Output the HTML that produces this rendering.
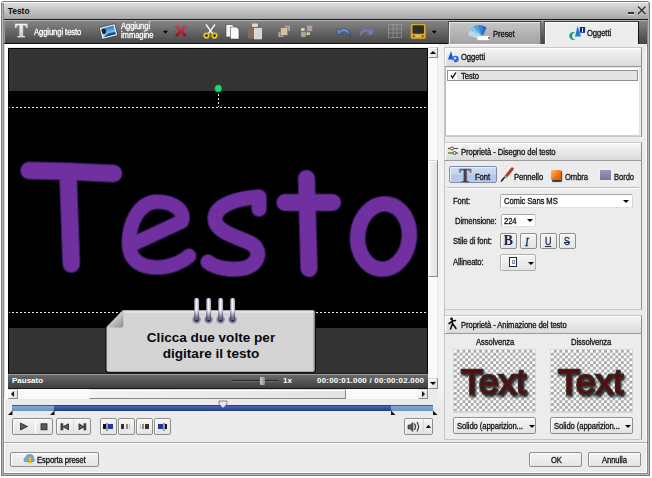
<!DOCTYPE html>
<html><head><meta charset="utf-8">
<style>
*{margin:0;padding:0;box-sizing:border-box}
html,body{width:652px;height:478px;overflow:hidden;background:#fff;font-family:"Liberation Sans",sans-serif}
.a{position:absolute}
.t{position:absolute;white-space:nowrap;font-size:8.5px;line-height:10px;letter-spacing:-0.1px;-webkit-text-stroke:0.3px currentColor;transform:scaleX(0.9);transform-origin:0 0}
.b{font-weight:bold;font-size:8px;letter-spacing:0;-webkit-text-stroke:0;transform:none}
.btn{position:absolute;border:1px solid #8e8e8e;border-radius:2px;background:linear-gradient(#f4f4f4,#e4e4e4);box-shadow:inset 1px 1px 0 #fff}
.sb{position:absolute;border:1px solid #d4d4d4;border-left-color:#f4f4f4;border-right-color:#8a8a8a;border-bottom-color:#8a8a8a;background:linear-gradient(90deg,#f2f2f2,#e2e2e2);box-shadow:inset 1px 1px 0 #fff}
.hdr{position:absolute;left:444px;width:198px;height:19px;border:1px solid #c8c8c8;border-right-color:#8e8e8e;border-bottom-color:#9a9a9a;background:linear-gradient(#f6f6f6,#dadada);box-shadow:inset 1px 1px 0 #fff}
.pnl{position:absolute;left:444px;width:198px;border:1px solid #c6c6c6;border-right-color:#8e8e8e;border-top:none;background:#ececec}
.dd{position:absolute;border:1px solid #b8b8b8;border-radius:2px;background:#fff}
.arr{position:absolute;width:0;height:0;border-left:3px solid transparent;border-right:3px solid transparent;border-top:3px solid #000}
.chk{position:absolute;background-color:#fff;background-image:linear-gradient(45deg,#a4a4a4 25%,transparent 25%,transparent 75%,#a4a4a4 75%),linear-gradient(45deg,#a4a4a4 25%,transparent 25%,transparent 75%,#a4a4a4 75%);background-size:5.6px 5.6px;background-position:0 0,2.8px 2.8px;border:1px solid #d8d8d8}
</style></head><body>
 <!-- outer frame -->
 <div class="a" style="left:1px;top:1px;width:649px;height:475px;background:#7a7a7a;border-radius:3px 3px 0 0"></div>
 <div class="a" style="left:2px;top:2px;width:647px;height:473px;background:#b8b8b8;border-radius:2px 2px 0 0"></div>
 <div class="a" style="left:3px;top:3px;width:645px;height:471px;background:#888"></div>
 <div class="a" style="left:4px;top:3px;width:643px;height:470px;background:#fff"></div>
 <div class="a" style="left:5px;top:3px;width:641px;height:469px;background:#ebebeb"></div>
 <!-- title bar -->
 <div class="a" style="left:2px;top:2px;width:647px;height:1px;background:#f4f4f4;border-radius:2px 2px 0 0"></div>
 <div class="a" style="left:4px;top:3px;width:644px;height:16px;background:linear-gradient(#dedede,#a6a6a6)"></div>
 <div class="t b" style="left:7.8px;top:6px;font-size:8.4px;color:#0a0a0a">Testo</div>
 <div class="a" style="left:628px;top:12px;width:6px;height:2px;background:#333;box-shadow:0 1px 0 #e0e0e0"></div>
 <svg class="a" style="left:636px;top:5px" width="11" height="11"><path d="M2 1.5L9.5 9M9.5 1.5L2 9" stroke="#333" stroke-width="1.3"/></svg>
 <div class="a" style="left:4px;top:19px;width:644px;height:1px;background:#1a1a1a"></div>
 <!-- toolbar -->
 <div class="a" style="left:4px;top:20px;width:643px;height:24px;background:linear-gradient(#b4b4b4 0,#b4b4b4 1px,#858585 1px,#474747 23px)"></div>
 <div class="a" style="left:4px;top:21px;width:1px;height:22px;background:#9a9a9a"></div>
 <div class="a" style="left:4px;top:43px;width:444px;height:1px;background:#101010"></div>
 <!-- toolbar items -->
 <svg class="a" style="left:0;top:20px" width="448" height="24">
  <defs>
   <linearGradient id="tg" x1="0" y1="0" x2="0" y2="1"><stop offset="0" stop-color="#ffffff"/><stop offset="1" stop-color="#b8b8b8"/></linearGradient>
   <linearGradient id="sky" x1="0" y1="0" x2="0" y2="1"><stop offset="0" stop-color="#2a78d0"/><stop offset="1" stop-color="#a8e4f8"/></linearGradient>
   <linearGradient id="xr" x1="0" y1="0" x2="0" y2="1"><stop offset="0" stop-color="#e04048"/><stop offset="1" stop-color="#a01018"/></linearGradient>
   <linearGradient id="ub" x1="0" y1="0" x2="0" y2="1"><stop offset="0" stop-color="#7aa8e8"/><stop offset="1" stop-color="#2a5ab0"/></linearGradient>
  </defs>
  <text x="15" y="17.2" font-family="Liberation Serif" font-weight="bold" font-size="18.5" fill="url(#tg)" stroke="#f0f0f0" stroke-width="0.5">T</text>
  <g transform="translate(0,-20) rotate(-14 108.5 31.5)"><rect x="100.5" y="25.5" width="16" height="12" fill="#fdfdfd" stroke="#222" stroke-width="0.6"/><rect x="102" y="27" width="13" height="9" fill="url(#sky)"/><path d="M102 28.5q2-1.5 4 0q1 2-0.5 4q-2 1-3.5-0.5z" fill="#142810"/><path d="M102 36l5-2.5q4-1 8 0.5v2z" fill="#1a4a90"/></g>
  <path d="M163 10.8h5l-2.5 3z" fill="#000"/>
  <path d="M176.8 6.8L185 15.2M185 6.8L176.8 15.2" stroke="#5a2a2a" stroke-width="3" stroke-linecap="round" opacity="0.7"/>
  <path d="M176.8 6.8L185 15.2M185 6.8L176.8 15.2" stroke="url(#xr)" stroke-width="2.2" stroke-linecap="round"/>
  <path d="M206 4.5L212.5 13.5M215 4.5L208.5 13.5" stroke="#f4f4f4" stroke-width="1.4"/>
  <circle cx="206.5" cy="15.6" r="2.2" fill="#1a1a40" stroke="#f0cc00" stroke-width="1.8"/><circle cx="214.5" cy="15.6" r="2.2" fill="#1a1a40" stroke="#f0cc00" stroke-width="1.8"/>
  <path d="M226 4.5h6l2.5 2.5V17H226z" fill="#f4f4f4" stroke="#333" stroke-width="0.5"/>
  <path d="M230.5 7h6l2.5 2.5V19h-8.5z" fill="#fafafa" stroke="#333" stroke-width="0.5"/>
  <rect x="248" y="5.5" width="13.5" height="13" rx="1" fill="#8a6a58"/><rect x="252" y="3.5" width="6" height="3.5" rx="1" fill="#d8d8d8"/><rect x="254" y="8" width="8" height="11.3" fill="#d8d8d8"/>
  <rect x="284.5" y="5.8" width="5.5" height="5" fill="#b0a0a0"/><rect x="278.3" y="12" width="5.5" height="5" fill="#b0a0a0"/><rect x="280.5" y="7.8" width="7.3" height="7.4" fill="#d0c4a0" stroke="#555" stroke-width="0.4"/>
  <rect x="307" y="5.7" width="5.2" height="5.4" fill="#b0a0a0"/><rect x="301" y="11.8" width="4.8" height="5.1" fill="#b0a0a0"/><rect x="301" y="8" width="3.6" height="3" fill="#d8cc9a"/><rect x="306.4" y="12.4" width="3.6" height="2.6" fill="#d8cc9a"/>
  <path d="M337 8L337.3 14.5L343.5 14.5L341 12.3Q346 10.5 349.5 15.5Q350.5 17 350.5 17Q350 10 345.5 9Q342 8.5 339.5 10.3Z" fill="url(#ub)" stroke="#1a3060" stroke-width="0.4"/>
  <path d="M373 8L372.7 14.5L366.5 14.5L369 12.3Q364 10.5 360.5 15.5Q359.5 17 359.5 17Q360 10 364.5 9Q368 8.5 370.5 10.3Z" fill="#6a80b0"/>
  <g fill="none" stroke="#a8a8a8" stroke-width="1" stroke-dasharray="1 1"><rect x="388.5" y="4.5" width="13" height="13"/><path d="M393 4.5v13M397 4.5v13M388.5 9h13M388.5 13h13"/></g>
  <rect x="410.5" y="3.5" width="15.5" height="15.5" rx="2" fill="#d8a838" stroke="#8a6a20" stroke-width="0.6"/><rect x="412.5" y="5.3" width="11.5" height="8.5" rx="1" fill="#2e2e2e"/><circle cx="413.8" cy="16.2" r="1" fill="#8a3a10"/><circle cx="422.7" cy="16.2" r="1" fill="#8a3a10"/><rect x="416" y="15.5" width="4.5" height="1.4" fill="#e8c870"/>
  <path d="M431.8 10.8h5l-2.5 3z" fill="#000"/>
 </svg>
 <div class="t" style="left:34.3px;top:27.2px;color:#fff">Aggiungi testo</div>
 <div class="t" style="left:120.5px;top:22.2px;color:#fff;line-height:8.8px">Aggiungi<br>immagine</div>
 <!-- left content frame -->
 <div class="a" style="left:4px;top:44px;width:436px;height:3px;background:#fff"></div>
 <div class="a" style="left:4px;top:44px;width:4px;height:355px;background:#fff;border-left:1px solid #e0e0e0"></div>
 <div class="a" style="left:438px;top:44px;width:6px;height:355px;background:#f2f2f2"></div>
 <div class="a" style="left:444px;top:44px;width:1px;height:393px;background:#bdbdbd"></div>
 <!-- video -->
 <div class="a" style="left:8px;top:48px;width:420px;height:326px;background:#000"></div>
 <div class="a" style="left:9px;top:49px;width:418px;height:42px;background:#333"></div>
 <div class="a" style="left:9px;top:328px;width:418px;height:45px;background:#333"></div>
 <!-- dotted lines -->
 <div class="a" style="left:9px;top:107px;width:418px;height:1px;background-image:linear-gradient(90deg,transparent 1px,#e8e8e8 1px,#e8e8e8 3px,transparent 3px);background-size:4px 1px;background-position:-2px 0"></div>
 <div class="a" style="left:9px;top:312px;width:418px;height:1px;background-image:linear-gradient(90deg,transparent 1px,#e8e8e8 1px,#e8e8e8 3px,transparent 3px);background-size:4px 1px;background-position:-2px 0"></div>
 <div class="a" style="left:218px;top:93px;width:1px;height:14px;background-image:linear-gradient(#e8e8e8 50%,transparent 50%);background-size:1px 4px;background-position:0 1px"></div>
 <svg class="a" style="left:210px;top:80px" width="16" height="16"><circle cx="8.3" cy="8.4" r="3.9" fill="#18e070" stroke="#3a1030" stroke-width="0.7"/></svg>
 <!-- big text -->
 <svg class="a" style="left:0;top:0" width="440" height="380">
  <g fill="none" stroke-linecap="round" stroke-linejoin="round">
   <g stroke="#3e1c64">
    <path stroke-width="18.4" d="M29.2 170.5Q70 171 113.5 173.5M68.2 178L71.3 264"/>
    <path stroke-width="15.6" d="M135.5 243L181.5 221.5C186 210 172 201.5 157 201.7C138 202 129 225 129 243C129 262 143 267.5 157 267.5C170 267.5 182 262 189 256"/>
    <path stroke-width="16" d="M259 209L259 197C240 198 215 204 215 219C215 232 238 237 250 243C262 249 260 263 245 268C232 271 215 268 208 262"/>
    <path stroke-width="18" d="M306.5 178.5L309 268.5M285 202.5L332.5 202.5"/>
    <ellipse cx="383.5" cy="236.5" rx="25.8" ry="32.7" transform="rotate(6 383.5 236.5)" stroke-width="16.4"/>
   </g>
   <g stroke="#7030a0">
    <path stroke-width="16.2" d="M29.2 170.5Q70 171 113.5 173.5M68.2 178L71.3 264"/>
    <path stroke-width="13.4" d="M135.5 243L181.5 221.5C186 210 172 201.5 157 201.7C138 202 129 225 129 243C129 262 143 267.5 157 267.5C170 267.5 182 262 189 256"/>
    <path stroke-width="13.8" d="M259 209L259 197C240 198 215 204 215 219C215 232 238 237 250 243C262 249 260 263 245 268C232 271 215 268 208 262"/>
    <path stroke-width="15.8" d="M306.5 178.5L309 268.5M285 202.5L332.5 202.5"/>
    <ellipse cx="383.5" cy="236.5" rx="25.8" ry="32.7" transform="rotate(6 383.5 236.5)" stroke-width="14.2"/>
   </g>
  </g>
 </svg>
 <!-- bubble -->
 <svg class="a" style="left:0;top:0" width="440" height="380">
  <defs>
   <linearGradient id="rod" x1="0" x2="1" y1="0" y2="0"><stop offset="0" stop-color="#8a8aa6"/><stop offset="0.45" stop-color="#ffffff"/><stop offset="1" stop-color="#9a9ab4"/></linearGradient>
   <linearGradient id="rodv" x1="0" x2="0" y1="0" y2="1"><stop offset="0.6" stop-color="#000" stop-opacity="0"/><stop offset="1" stop-color="#2a2a55" stop-opacity="0.8"/></linearGradient>
   <radialGradient id="hole"><stop offset="0.3" stop-color="#1e1e40"/><stop offset="0.55" stop-color="#6a6a8a"/><stop offset="1" stop-color="#a8a8bc"/></radialGradient>
   <linearGradient id="flap" x1="0" y1="0" x2="1" y2="1"><stop offset="0.3" stop-color="#e4e4e4"/><stop offset="1" stop-color="#8a8a8a"/></linearGradient>
   <g id="ring"><circle cx="196.6" cy="319.5" r="4.4" fill="url(#hole)"/><rect x="194.2" y="298" width="4.9" height="22" rx="2.45" fill="url(#rod)"/><rect x="194.2" y="298" width="4.9" height="22" rx="2.45" fill="url(#rodv)"/></g>
  </defs>
  <path d="M105.5 327.6L123.4 309.4H313.5Q316 309.4 316 312V370.5Q316 372.8 313.5 372.8H108Q105.5 372.8 105.5 370.3Z" fill="#0a0a0a"/>
  <path d="M106.5 328L123.6 310.4H313Q314.5 310.4 314.5 312V370Q314.5 371.8 313 371.8H108.5Q106.5 371.8 106.5 369.8Z" fill="#d4d4d4"/>
  <path d="M123.6 310.4H313Q314.5 310.4 314.5 312V313H123.6Z" fill="#e2e2e2"/>
  <path d="M313.2 311V370.5Q313.2 371 312.7 371H108.5V371.8H313Q314.5 371.8 314.5 370V312Q314.5 311 313.2 311Z" fill="#a8a8a8"/>
  <path d="M106 327.6L123.4 309.6V325Q123.4 327.6 120.8 327.6Z" fill="url(#flap)"/>
  <use href="#ring"/><use href="#ring" x="12"/><use href="#ring" x="24"/><use href="#ring" x="36"/>
 </svg>
 <div class="t" style="left:105px;top:330px;width:212px;text-align:center;font-weight:bold;font-size:13.6px;letter-spacing:0;transform:none;-webkit-text-stroke:0;line-height:15.5px;color:#08080f">Clicca due volte per<br>digitare il testo</div>
 <!-- status bar -->
 <div class="a" style="left:8px;top:373px;width:420px;height:16px;background:linear-gradient(#1e1e1e 0,#1e1e1e 1px,#9a9a9a 1px,#9a9a9a 2px,#6a6a6a 2px,#3e3e3e 15px,#161616 15px)"></div>
 <div class="t b" style="left:12px;top:376px;color:#fff">Pausato</div>
 <div class="a" style="left:232px;top:380px;width:46px;height:2px;background:#2a2a2a;border-bottom:1px solid #6a6a6a"></div>
 <div class="a" style="left:260px;top:377px;width:5px;height:8px;background:linear-gradient(90deg,#ccc,#888);border-radius:1px"></div>
 <div class="t b" style="left:283px;top:376px;color:#fff">1x</div>
 <div class="t b" style="left:317px;top:376px;letter-spacing:0.2px;color:#fff">00:00:01.000 / 00:00:02.000</div>
 <!-- v scrollbar -->
 <div class="a" style="left:428px;top:48px;width:10px;height:341px;background:#fafafa;border-right:1px solid #e8e8e8"></div>
 <div class="sb" style="left:428px;top:47px;width:10px;height:11px"></div>
 <div class="arr" style="left:430px;top:51px;border-left-width:3px;border-right-width:3px;border-top:none;border-bottom:3px solid #000"></div>
 <div class="sb" style="left:428px;top:160px;width:10px;height:117px"></div>
 <div class="sb" style="left:428px;top:378px;width:10px;height:11px"></div>
 <div class="arr" style="left:430px;top:382px;border-left-width:3px;border-right-width:3px;border-top-width:3px;border-top-color:#000"></div>
 <!-- h scrollbar -->
 <div class="a" style="left:8px;top:389px;width:420px;height:10px;background:#fafafa"></div>
 <div class="sb" style="left:8px;top:389px;width:10px;height:10px"></div>
 <div class="a" style="left:11px;top:391px;width:0;height:0;border-top:3px solid transparent;border-bottom:3px solid transparent;border-right:3px solid #111"></div>
 <div class="sb" style="left:89px;top:389px;width:257px;height:10px"></div>
 <div class="sb" style="left:418px;top:389px;width:10px;height:10px"></div>
 <div class="a" style="left:422px;top:391px;width:0;height:0;border-top:3px solid transparent;border-bottom:3px solid transparent;border-left:3px solid #111"></div>
 <div class="a" style="left:428px;top:389px;width:10px;height:10px;background:#ebebeb"></div>
 <!-- timeline -->
 <div class="a" style="left:12px;top:405px;width:421px;height:6px;background:linear-gradient(#4a68b8,#243a88);border-top:1px solid #33405a"></div>
 <div class="a" style="left:12px;top:405px;width:42px;height:6px;background:linear-gradient(#86acd8,#6690c6);border-top:1px solid #4a5a70"></div>
 <div class="a" style="left:391px;top:405px;width:42px;height:6px;background:linear-gradient(#86acd8,#6690c6);border-top:1px solid #4a5a70"></div>
 <svg class="a" style="left:218px;top:400px" width="10" height="9"><path d="M1 1H9V4L5 8L1 4Z" fill="#e8e8e8" stroke="#888"/></svg>
 <svg class="a" style="left:0;top:410px" width="440" height="6"><g fill="#111"><path d="M8 5L12.5 0.5V5Z"/><path d="M50 5L54.5 0.5V5Z"/><path d="M391 0.5L395.5 5H391Z"/><path d="M433 0.5L437.5 5H433Z"/></g></svg>
 <!-- control buttons -->
 <div class="btn" style="left:12px;top:418px;width:41px;height:17px"></div>
 <div class="a" style="left:35px;top:419px;width:1px;height:15px;background:#d8d8d8;border-right:1px solid #fff"></div>
 <div class="btn" style="left:56px;top:418px;width:35px;height:17px"></div>
 <div class="a" style="left:73px;top:419px;width:1px;height:15px;background:#d8d8d8"></div>
 <div class="btn" style="left:100px;top:418px;width:17px;height:17px"></div>
 <div class="btn" style="left:118px;top:418px;width:17px;height:17px"></div>
 <div class="btn" style="left:136px;top:418px;width:17px;height:17px"></div>
 <div class="btn" style="left:154px;top:418px;width:17px;height:17px"></div>
 <div class="btn" style="left:404px;top:418px;width:29px;height:17px"></div>
 <div class="a" style="left:423px;top:419px;width:1px;height:15px;background:#d8d8d8"></div>
 <svg class="a" style="left:0;top:414px" width="440" height="26"><g fill="#5a5a5a" stroke="#222" stroke-width="0.8">
  <path d="M20.5 9L27.5 12.5L20.5 16Z"/><rect x="41" y="9.8" width="6" height="6"/>
  <rect x="61" y="9.8" width="1.8" height="6"/><path d="M68.5 9.8L63 12.8L68.5 15.8Z"/>
  <rect x="84" y="9.8" width="1.8" height="6"/><path d="M79 9.8L84 12.8L79 15.8Z"/>
  </g>
  <g stroke="none">
   <rect x="103" y="10" width="3" height="5" fill="#111"/><rect x="107" y="10" width="6" height="5" fill="#2038a0"/><rect x="106" y="9" width="2" height="8" fill="#999"/>
   <rect x="121" y="10" width="3" height="5" fill="#333"/><rect x="126" y="10" width="2" height="5" fill="#888"/><rect x="129" y="10" width="1" height="5" fill="#bbb"/>
   <rect x="140" y="10" width="1" height="5" fill="#bbb"/><rect x="142" y="10" width="2" height="5" fill="#888"/><rect x="145" y="10" width="4" height="5" fill="#333"/>
   <rect x="158" y="10" width="6" height="5" fill="#2038a0"/><rect x="163" y="9" width="2" height="8" fill="#999"/><rect x="165" y="10" width="2" height="5" fill="#111"/>
   <path d="M408 11H410L413 8.5V17.5L410 15H408Z" fill="#5a5a5a" stroke="#333" stroke-width="0.6"/>
   <path d="M414.5 9.5Q416.5 12.8 414.5 16M417 8Q420 12.8 417 17.5" stroke="#333" stroke-width="1.1" fill="none"/>
   <path d="M425.8 14L428.4 10.8L431 14Z" fill="#111"/>
  </g>
 </svg>
 <!-- bottom -->
 <div class="a" style="left:4px;top:442px;width:643px;height:1px;background:#a8a8a8"></div>
 <div class="a" style="left:4px;top:443px;width:643px;height:1px;background:#fff"></div>
 <div class="btn" style="left:10px;top:452px;width:89px;height:15px"></div>
 <div class="t" style="left:37px;top:455px;color:#111">Esporta preset</div>
 <svg class="a" style="left:22px;top:452px" width="14" height="15"><path d="M2.5 9.5Q1 6 4 5Q4.5 2 8 2.5Q11.5 2.5 11.5 6Q13 7 12 9.5Z" fill="#6ab0e8" stroke="#3a80c0" stroke-width="0.6"/><path d="M5 7.5L8 4.5L11 7.5H9.3V11.5H6.7V7.5Z" fill="#f8c020" stroke="#b08000" stroke-width="0.5"/><path d="M3 11.5h9" stroke="#ddd" stroke-width="1.2"/></svg>
 <div class="btn" style="left:529px;top:452px;width:53px;height:15px"></div>
 <div class="t" style="left:550.5px;top:455px;color:#111">OK</div>
 <div class="btn" style="left:588px;top:452px;width:53px;height:15px"></div>
 <div class="t" style="left:602px;top:455px;color:#111">Annulla</div>
 <!-- tabs -->
 <div class="a" style="left:448px;top:21px;width:93px;height:23px;border-top:1px solid #3a3a3a;border-left:1px solid #555;border-right:1px solid #666;background:linear-gradient(#c6c6c6,#a2a2a2);box-shadow:inset 1px 1px 0 #e8e8e8"></div>
 <div class="a" style="left:544px;top:21px;width:95px;height:26px;border-top:1px solid #3a3a3a;border-left:1px solid #555;border-right:1px solid #111;background:#ececec;box-shadow:inset 1px 1px 0 #fff"></div>
 <div class="a" style="left:444px;top:44px;width:203px;height:3px;background:#ececec"></div>
 <div class="a" style="left:448px;top:44px;width:93px;height:1px;background:#fff"></div>
 <div class="t" style="left:492.5px;top:28.5px;color:#111">Preset</div>
 <div class="t" style="left:587px;top:28px;color:#111">Oggetti</div>
 <svg class="a" style="left:0;top:0" width="652" height="44"><g transform="translate(0 20)">
  <g transform="translate(479 17)"><rect x="-2" y="-12" width="5" height="12" rx="1.5" fill="#2a6ac0" transform="rotate(25)"/><rect x="-2" y="-12" width="5" height="12" rx="1.5" fill="#3a80d0" transform="rotate(5)"/><rect x="-2" y="-12" width="5" height="12" rx="1.5" fill="#5aa0dc" transform="rotate(-20)"/><rect x="-2" y="-12" width="5" height="12" rx="1.5" fill="#8ac4e8" transform="rotate(-45)"/><rect x="-2" y="-11" width="5" height="11" rx="1.5" fill="#b4dcf0" transform="rotate(-70)"/></g>
  <rect x="476.5" y="15.5" width="14" height="5" rx="2.5" fill="#fff" stroke="#999" stroke-width="0.5"/><circle cx="489" cy="18" r="0.9" fill="#444"/>
  <path d="M575.5 12.5A4 4 0 1 0 575.5 19.3A3.2 3.2 0 1 1 575.5 12.5Z" fill="#12a070"/>
  <path d="M577.5 6L575 16.5H581Z" fill="#1a80d0"/>
  <rect x="579.8" y="7" width="5.3" height="5.8" fill="#0a2aa0"/><rect x="582" y="8" width="1" height="4" fill="#fff"/>
 </g></svg>
 <!-- right panel: Oggetti -->
 <div class="hdr" style="top:47px;height:20px"></div>
 <svg class="a" style="left:446px;top:49px" width="16" height="16"><path d="M5 2L2 10.5H7.5Z" fill="#1a5ad0"/><circle cx="9.5" cy="10" r="3.2" fill="#2a6ae0"/><circle cx="9" cy="9.3" r="1.3" fill="#bde"/><path d="M1.5 13L5 11H8V13Z" fill="#cde"/></svg>
 <div class="t" style="left:461px;top:52px;color:#111">Oggetti</div>
 <div class="pnl" style="top:67px;height:70px"></div>
 <div class="a" style="left:445px;top:67px;width:195px;height:69px;background:#fff;border:1px solid #e4e4e4;border-left-color:#b8b8b8;border-bottom-color:#d0d0d0"></div>
 <div class="a" style="left:447px;top:70px;width:191px;height:11px;background:#e4e4e4;border:1px solid #909090"></div>
 <div class="a" style="left:448px;top:71px;width:9px;height:9px;background:#fff"></div>
 <svg class="a" style="left:449px;top:71px" width="9" height="9"><path d="M2 4.2L3.5 6.8L7 1.5" fill="none" stroke="#000" stroke-width="1.3"/></svg>
 <div class="t" style="left:461px;top:71px;color:#111">Testo</div>
 <!-- props header -->
 <div class="hdr" style="top:142px;height:19px"></div>
 <svg class="a" style="left:447px;top:146px" width="12" height="10"><g stroke="#444" stroke-width="1" fill="none"><path d="M1 2.5h2.5M6.5 2.5h4.5M1 7h5M9 7h2"/><circle cx="5" cy="2.5" r="1.5" fill="#fff"/><circle cx="7.5" cy="7" r="1.5" fill="#fff"/></g><path d="M1 1.8h2v1.4H1z" fill="#d04040"/><path d="M1 6.3h4v1.4H1z" fill="#60c040"/></svg>
 <div class="t" style="left:460.5px;top:147px;color:#111">Proprietà - Disegno del testo</div>
 <div class="pnl" style="top:161px;height:149px"></div>
 <div class="a" style="left:449px;top:166px;width:48px;height:17px;border:1px solid #7d8ea8;border-radius:2px;background:linear-gradient(#d0def2 0,#c0d2ec 50%,#b0c6e6 50%,#b8ccea 100%);box-shadow:inset 1px 1px 0 #e8f0fa"></div>
 <svg class="a" style="left:458px;top:166px" width="16" height="17"><defs><linearGradient id="tg2" x1="0" x2="1"><stop offset="0" stop-color="#9a9a9a"/><stop offset="0.45" stop-color="#3a3a3a"/><stop offset="1" stop-color="#8a8a8a"/></linearGradient></defs><text x="1.2" y="16" font-family="Liberation Serif" font-weight="bold" font-size="18" fill="url(#tg2)" stroke="#555" stroke-width="0.5">T</text></svg>
 <div class="t" style="left:474.5px;top:171.5px;color:#111">Font</div>
 <svg class="a" style="left:499px;top:166px" width="16" height="17"><path d="M13.2 2.8L7 10.5" stroke="#b83a20" stroke-width="3" stroke-linecap="round"/><path d="M7.2 10.2L4.5 13.5Q3.5 15.5 1.8 15.8Q2.5 13.5 4.2 11.8Z" fill="#2a2a2a" stroke="#111" stroke-width="0.5"/><path d="M6 11.6l1.6-1.5" stroke="#bbb" stroke-width="1.4"/></svg>
 <div class="t" style="left:514px;top:171.5px;color:#111">Pennello</div>
 
 <div class="a" style="left:551px;top:169.5px;width:9.5px;height:10px;background:linear-gradient(135deg,#ffc070,#f07010 60%,#d85a00);border-radius:1px;box-shadow:1px 1.5px 1px #3a3a3a"></div>
 <div class="t" style="left:565px;top:171.5px;color:#111">Ombra</div>
 <div class="a" style="left:600px;top:169.5px;width:10.5px;height:10.5px;background:linear-gradient(#9896b8,#7876a0);outline:1px dotted #f4f4f4;outline-offset:0"></div>
 <div class="t" style="left:613.5px;top:171.5px;color:#111">Bordo</div>
 <div class="a" style="left:447px;top:187px;width:192px;height:1px;background:#bcbcbc"></div>
 <div class="a" style="left:447px;top:188px;width:192px;height:1px;background:#fff"></div>
 <div class="t" style="left:452.8px;top:196px;color:#111">Font:</div>
 <div class="dd" style="left:500px;top:194px;width:133px;height:14px;border-color:#a4a4a4 #d4d4d4 #e0e0e0 #b4b4b4"></div>
 <div class="t" style="left:503.5px;top:195.5px;color:#111">Comic Sans MS</div>
 <div class="arr" style="left:622.5px;top:200px"></div>
 <div class="t" style="left:454.7px;top:216px;color:#111">Dimensione:</div>
 <div class="dd" style="left:501px;top:214px;width:35px;height:13px;border-color:#a4a4a4 #d4d4d4 #e0e0e0 #b4b4b4"></div>
 <div class="t" style="left:504px;top:216px;color:#111">224</div>
 <div class="arr" style="left:527px;top:219px"></div>
 <div class="t" style="left:452.8px;top:236px;color:#111">Stile di font:</div>
 <div class="btn" style="left:500px;top:233px;width:17px;height:16px"></div>
 <div class="btn" style="left:520px;top:233px;width:17px;height:16px"></div>
 <div class="btn" style="left:540px;top:233px;width:17px;height:16px"></div>
 <div class="btn" style="left:559px;top:233px;width:17px;height:16px"></div>
 <div class="t" style="left:503.5px;top:235px;font-family:'Liberation Serif',serif;font-weight:bold;font-size:14px;line-height:12px;color:#1a2a4a;transform:none;-webkit-text-stroke:0">B</div>
 <div class="t" style="left:525px;top:235.5px;font-family:'Liberation Serif',serif;font-style:italic;font-size:12.5px;line-height:12px;color:#1a2a4a">I</div>
 <div class="t" style="left:544.5px;top:235.5px;font-size:10px;line-height:12px;color:#1a2a4a;text-decoration:underline">U</div>
 <div class="t" style="left:564px;top:235.5px;font-size:10px;line-height:12px;color:#1a2a4a;text-decoration:line-through">S</div>
 <div class="t" style="left:452.8px;top:256.5px;color:#111">Allineato:</div>
 <div class="btn" style="left:500px;top:254px;width:36px;height:17px;border-color:#b0b0b0"></div>
 <div class="a" style="left:509px;top:257px;width:8px;height:10px;border:1px solid #1a2a4a;background:#fff"></div>
 <div class="a" style="left:511.5px;top:260px;width:3px;height:4px;border:1px solid #8a8a9a"></div>
 <div class="arr" style="left:528px;top:262px"></div>
 <!-- animation -->
 <div class="hdr" style="top:315px;height:19px"></div>
 <svg class="a" style="left:447px;top:317px" width="12" height="14"><g fill="none" stroke="#111" stroke-width="1.5" stroke-linecap="round"><path d="M5 2L5.5 6.5L3.5 12M5.5 6.5L9 11.5M5.2 4.5L2 6.5M5.2 4L8.5 3.5"/></g><circle cx="4.5" cy="1.8" r="1.4" fill="#111"/></svg>
 <div class="t" style="left:460.5px;top:320px;color:#111">Proprietà - Animazione del testo</div>
 <div class="pnl" style="top:334px;height:106px"></div>
 <div class="t" style="left:476px;top:337px;color:#111">Assolvenza</div>
 <div class="t" style="left:571px;top:337px;color:#111">Dissolvenza</div>
 <div class="chk" style="left:453px;top:349px;width:83px;height:64px"></div>
 <div class="chk" style="left:550px;top:349px;width:83px;height:64px"></div>
 <svg class="a" style="left:444px;top:340px" width="200" height="80"><defs><filter id="sh" x="-20%" y="-20%" width="140%" height="140%"><feGaussianBlur in="SourceAlpha" stdDeviation="1.2"/><feOffset dx="1" dy="1.5"/><feComponentTransfer><feFuncA type="linear" slope="0.8"/></feComponentTransfer><feMerge><feMergeNode/><feMergeNode in="SourceGraphic"/></feMerge></filter></defs>
  <g font-family="Liberation Sans" font-size="35.5" fill="#561010" stroke="#2e2e2e" stroke-width="2.6" paint-order="stroke" filter="url(#sh)"><text x="17.3" y="53.5">Text</text><text x="114.3" y="53.5">Text</text></g></svg>
 
 <div class="btn" style="left:453px;top:417px;width:83px;height:17px"></div>
 <div class="t" style="left:457px;top:421px;color:#111">Solido (apparizion...</div>
 <div class="arr" style="left:528.5px;top:424.5px"></div>
 <div class="btn" style="left:550px;top:417px;width:83px;height:17px"></div>
 <div class="t" style="left:554px;top:421px;color:#111">Solido (apparizion...</div>
 <div class="arr" style="left:624.5px;top:424.5px"></div>
</body></html>
